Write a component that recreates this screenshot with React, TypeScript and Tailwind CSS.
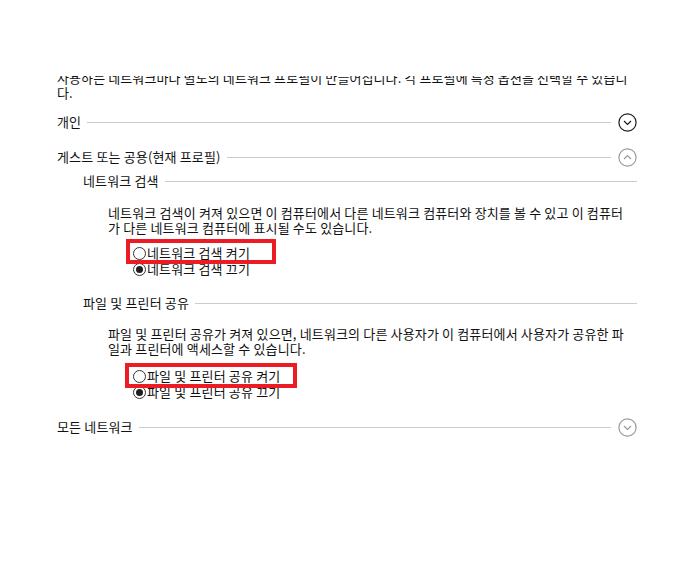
import React from "react";

function Chevron({ up = false, dark = false }: { up?: boolean; dark?: boolean }) {
  const c = dark ? "#1a1a1a" : "#9a9a9a";
  return (
    <svg width="19" height="19" viewBox="0 0 19 19" className="shrink-0">
      <circle cx="9.5" cy="9.5" r="8.6" fill="none" stroke={c} strokeWidth="1.2" />
      {up ? (
        <path d="M6 11 L9.5 7.5 L13 11" fill="none" stroke={c} strokeWidth="1.2" />
      ) : (
        <path d="M6 8 L9.5 11.5 L13 8" fill="none" stroke={c} strokeWidth="1.2" />
      )}
    </svg>
  );
}

function TopHeading({ text, up = false, dark = false }: { text: string; up?: boolean; dark?: boolean }) {
  return (
    <div className="flex items-center h-[20px]">
      <span className="leading-[16px] whitespace-nowrap">{text}</span>
      <div className="flex-1 h-px bg-[#cccccc] ml-[6px] mr-[7px]" />
      <Chevron up={up} dark={dark} />
    </div>
  );
}

function SubHeading({ text }: { text: string }) {
  return (
    <div className="flex items-center h-[16px] pl-[26px]">
      <span className="leading-[16px] whitespace-nowrap">{text}</span>
      <div className="flex-1 h-px bg-[#cccccc] ml-[6px]" />
    </div>
  );
}

function Radio({ text, checked = false }: { text: string; checked?: boolean }) {
  return (
    <div className="flex items-center h-[16px]">
      <span className="w-[13px] h-[13px] rounded-full border border-[#333333] bg-white flex items-center justify-center shrink-0">
        {checked && <span className="w-[7px] h-[7px] rounded-full bg-[#1e1e1e]" />}
      </span>
      <span className="ml-[1px] leading-[16px] whitespace-nowrap">{text}</span>
    </div>
  );
}

export default function App() {
  return (
    <div className="w-[696px] h-[564px] bg-white overflow-hidden text-[13px] tracking-[0.15px] text-[#111111] font-['Noto_Sans_CJK_KR','Noto_Sans',sans-serif]">
      <div className="pt-[76px]">
        <div className="overflow-hidden pl-[57px] w-[637px]">
          <div className="-mt-[6px] leading-[15px]">
            <div className="whitespace-nowrap tracking-[0.1px]">
              사용하는 네트워크마다 별도의 네트워크 프로필이 만들어집니다. 각 프로필에 특정 옵션을 선택할 수 있습니
            </div>
            <div>다.</div>
          </div>

          <div className="mt-[12px]">
            <TopHeading text="개인" dark />
          </div>
          <div className="mt-[15px]">
            <TopHeading text="게스트 또는 공용(현재 프로필)" up />
          </div>

          <div className="mt-[6px]">
            <SubHeading text="네트워크 검색" />
          </div>
          <div className="mt-[16px] pl-[51px] leading-[15px]">
            <div className="whitespace-nowrap">
              네트워크 검색이 켜져 있으면 이 컴퓨터에서 다른 네트워크 컴퓨터와 장치를 볼 수 있고 이 컴퓨터
            </div>
            <div className="whitespace-nowrap">가 다른 네트워크 컴퓨터에 표시될 수도 있습니다.</div>
          </div>
          <div className="mt-[10px] pl-[76px]">
            <div className="relative">
              <Radio text="네트워크 검색 켜기" />
              <Radio text="네트워크 검색 끄기" checked />
              <div className="absolute left-[-7px] top-[-6px] w-[150px] h-[25px] border-4 border-[#ec1c24]" />
            </div>
          </div>

          <div className="mt-[18px]">
            <SubHeading text="파일 및 프린터 공유" />
          </div>
          <div className="mt-[15px] pl-[51px] leading-[15px]">
            <div className="whitespace-nowrap">
              파일 및 프린터 공유가 켜져 있으면, 네트워크의 다른 사용자가 이 컴퓨터에서 사용자가 공유한 파
            </div>
            <div className="whitespace-nowrap">일과 프린터에 액세스할 수 있습니다.</div>
          </div>
          <div className="mt-[12px] pl-[76px]">
            <div className="relative">
              <Radio text="파일 및 프린터 공유 켜기" />
              <Radio text="파일 및 프린터 공유 끄기" checked />
              <div className="absolute left-[-8px] top-[-5px] w-[172px] h-[25px] border-4 border-[#ec1c24]" />
            </div>
          </div>

          <div className="mt-[17px]">
            <TopHeading text="모든 네트워크" />
          </div>
        </div>
      </div>
    </div>
  );
}
